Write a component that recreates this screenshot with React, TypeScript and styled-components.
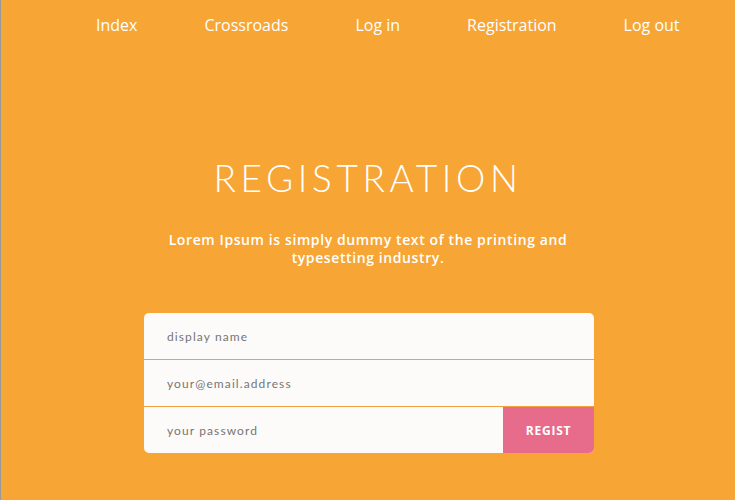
import React from "react";
import styled, { createGlobalStyle } from "styled-components";

const GlobalStyle = createGlobalStyle`
  html, body {
    margin: 0;
    padding: 0;
    background: #f7a535;
  }
  * {
    box-sizing: border-box;
  }
`;

const navItems = ["Index", "Crossroads", "Log in", "Registration", "Log out"];

const fields = [
  { placeholder: "display name", type: "text" },
  { placeholder: "your@email.address", type: "email" },
];

export default function App() {
  return (
    <>
      <GlobalStyle />
      <Page>
        <Nav>
          {navItems.map((item) => (
            <NavLink key={item} href="#">
              {item}
            </NavLink>
          ))}
        </Nav>

        <Hero>
          <Title>REGISTRATION</Title>
          <Lead>
            Lorem Ipsum is simply dummy text of the printing and typesetting
            industry.
          </Lead>
        </Hero>

        <Form onSubmit={(e) => e.preventDefault()}>
          {fields.map((f) => (
            <Row key={f.placeholder}>
              <Input type={f.type} placeholder={f.placeholder} />
            </Row>
          ))}
          <Row $last>
            <Input type="password" placeholder="your password" />
            <SubmitButton type="submit">REGIST</SubmitButton>
          </Row>
        </Form>
      </Page>
    </>
  );
}

const Page = styled.div`
  width: 735px;
  height: 500px;
  background: #f7a535;
  border-left: 1px solid #9a9a9a;
  overflow: hidden;
  font-family: "Open Sans", "Lato", sans-serif;
`;

const Nav = styled.nav`
  display: flex;
  align-items: center;
  gap: 67px;
  height: 49px;
  padding-left: 95px;
`;

const NavLink = styled.a`
  color: #ffffff;
  text-decoration: none;
  font-size: 16px;
  letter-spacing: 0;
`;

const Hero = styled.header`
  display: flex;
  flex-direction: column;
  align-items: center;
  padding-top: 107px;
  color: #ffffff;
`;

const Title = styled.h1`
  margin: 0;
  font-family: "Lato", sans-serif;
  font-size: 37px;
  font-weight: 300;
  letter-spacing: 4.6px;
  line-height: 44px;
`;

const Lead = styled.p`
  margin: 31px 0 0;
  width: 440px;
  text-align: center;
  font-size: 14px;
  font-weight: 600;
  line-height: 18px;
  letter-spacing: 0.6px;
`;

const Form = styled.form`
  width: 450px;
  margin: 46px 0 0 143px;
  background: #fdfbf9;
  border-radius: 5px;
  overflow: hidden;
`;

const Row = styled.div<{ $last?: boolean }>`
  display: flex;
  height: ${(p) => (p.$last ? "46px" : "47px")};
  border-bottom: ${(p) => (p.$last ? "none" : "1px solid #f0a23c")};
`;

const Input = styled.input`
  flex: 1;
  min-width: 0;
  border: none;
  outline: none;
  background: transparent;
  padding: 0 0 0 23px;
  font-family: "Lato", "Open Sans", sans-serif;
  font-size: 12px;
  letter-spacing: 1.1px;
  color: #555;

  ::placeholder {
    color: #6a6a6a;
  }
`;

const SubmitButton = styled.button`
  width: 91px;
  border: none;
  background: #e76b8a;
  color: #ffffff;
  font-family: "Open Sans", sans-serif;
  font-weight: 700;
  font-size: 12px;
  letter-spacing: 0.8px;
  cursor: pointer;
`;
